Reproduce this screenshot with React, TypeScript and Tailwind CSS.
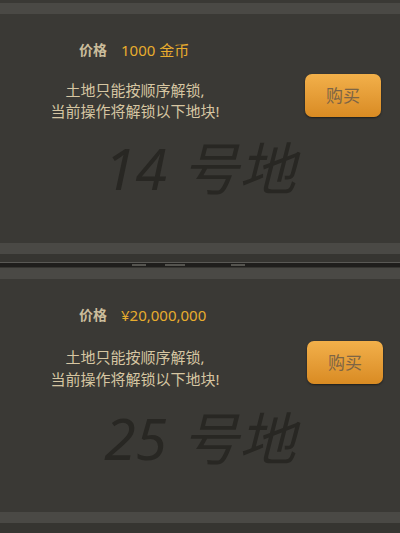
const FONT = { fontFamily: '"Noto Sans", "Noto Sans CJK SC", sans-serif' }

interface LandCardProps {
  price: string
  plot: string
  tall?: boolean
}

function Bar() {
  return <div className="h-[11px] bg-[#4a4945]" />
}

function LandCard({ price, plot, tall }: LandCardProps) {
  return (
    <section className={tall ? 'flex h-[233px] flex-col bg-[#3a3935]' : 'flex h-[229px] flex-col bg-[#3a3935]'}>
      <div className="flex pt-[25px]">
        <div className="flex w-[290px] flex-col">
          <p className="flex items-center pl-[79px] text-[14px] leading-[22px]">
            <span className="font-bold text-[#cbbd9c]">价格</span>
            <span className="ml-[14px] text-[15px] text-[#e8ad2e]">{price}</span>
          </p>
          <div className={tall ? 'mt-[20px] w-[270px] text-center text-[15px] leading-[22px] text-[#d6c6a2]' : 'mt-[19px] w-[270px] text-center text-[15px] leading-[21px] text-[#d6c6a2]'}>
            <p>土地只能按顺序解锁,</p>
            <p>当前操作将解锁以下地块!</p>
          </div>
        </div>
        <button
          type="button"
          className={tall
            ? 'mt-[37px] ml-[17px] h-[43px] w-[76px] rounded-[7px] bg-gradient-to-b from-[#f2b04a] to-[#d98b22] text-[17px] text-[#7d6545] shadow-[0_1px_2px_rgba(0,0,0,0.5)]'
            : 'mt-[35px] ml-[15px] h-[43px] w-[76px] rounded-[7px] bg-gradient-to-b from-[#f2b04a] to-[#d98b22] text-[17px] text-[#7d6545] shadow-[0_1px_2px_rgba(0,0,0,0.5)]'}
        >
          购买
        </button>
      </div>
      <div className={tall ? 'mt-[18px] text-center text-[57px] leading-[60px] text-[#282723] italic' : 'mt-[16px] text-center text-[57px] leading-[60px] text-[#282723] italic'}>
        {plot}
      </div>
    </section>
  )
}

export default function App() {
  return (
    <div className="h-[533px] w-[400px] overflow-hidden bg-[#363531]" style={FONT}>
      <div className="h-[3px] bg-[#3a3935]" />
      <Bar />
      <LandCard price="1000 金币" plot="14 号地" />
      <Bar />
      <div className="h-[8px] bg-[#363531]" />
      <div className="h-px bg-[#5a5955]" />
      <div className="relative h-[4px] bg-[#1f1e1c]">
        <div className="absolute top-[1px] left-[132px] h-[2px] w-[14px] bg-[#55544f]" />
        <div className="absolute top-[1px] left-[165px] h-[2px] w-[20px] bg-[#55544f]" />
        <div className="absolute top-[1px] left-[231px] h-[2px] w-[14px] bg-[#55544f]" />
      </div>
      <div className="h-px bg-[#363531]" />
      <Bar />
      <LandCard price="¥20,000,000" plot="25 号地" tall />
      <Bar />
    </div>
  )
}
